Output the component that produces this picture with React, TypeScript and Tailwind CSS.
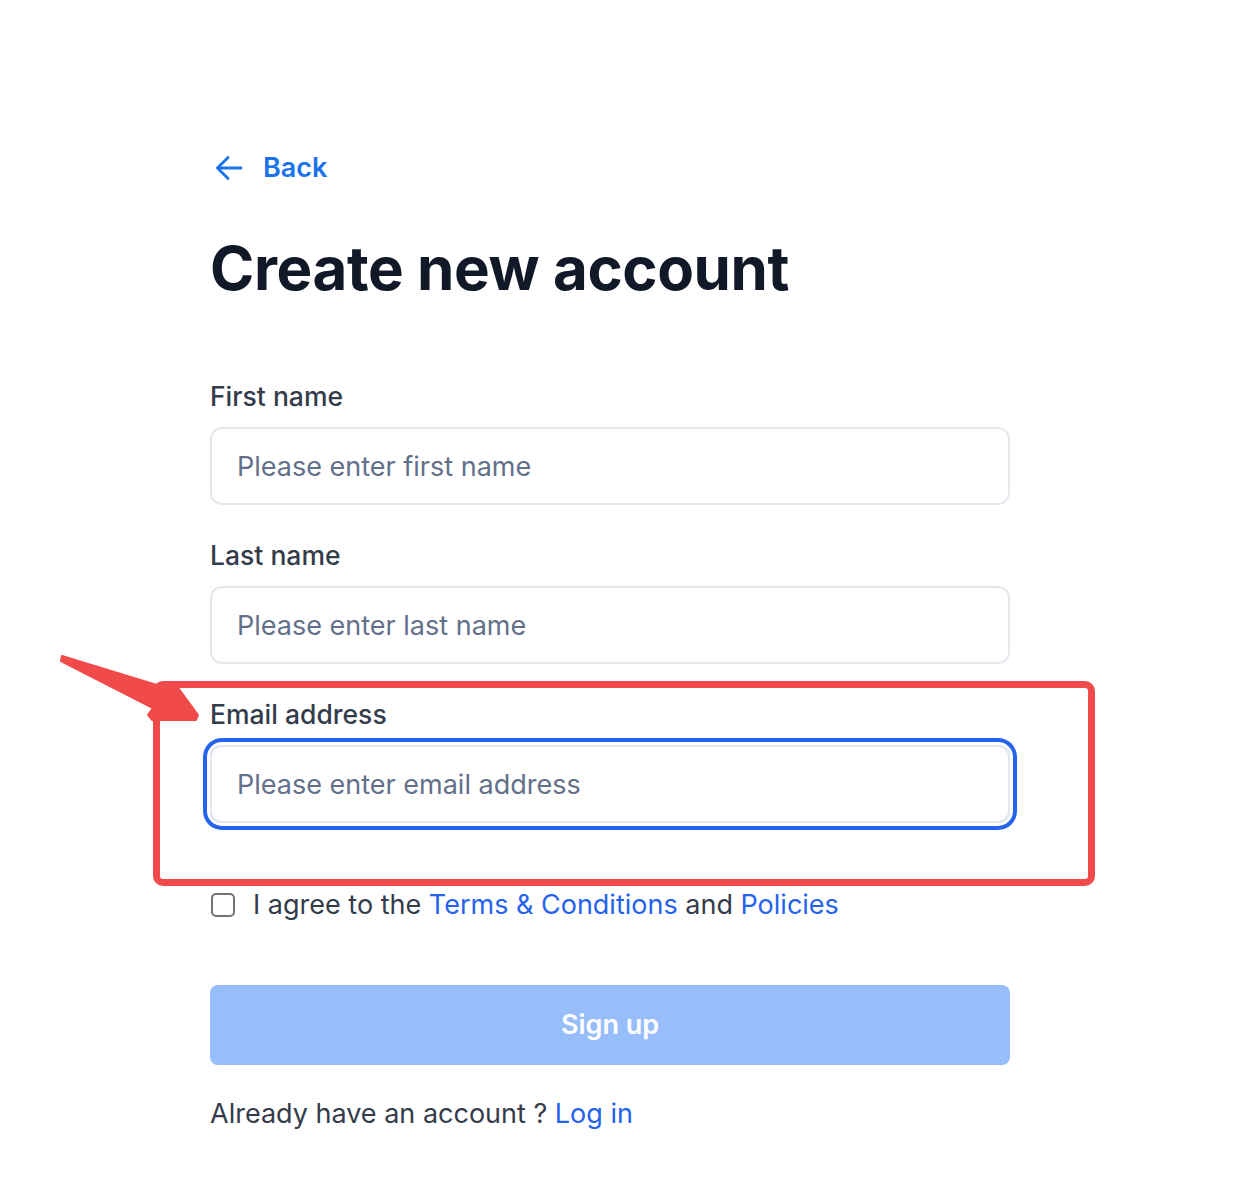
import React from 'react';

const font = { fontFamily: 'Inter, "Noto Sans", sans-serif' };

function Field({ label, placeholder, focused }: { label: string; placeholder: string; focused?: boolean }) {
    return (
        <div className="flex flex-col">
            <label className="text-[26.5px] leading-[36px] font-medium text-[#343c4b]">{label}</label>
            <input
                placeholder={placeholder}
                className={`mt-[13px] h-[78px] w-full rounded-[12px] border-2 border-[#e3e8ef] px-[25px] text-[27px] text-[#1f2937] placeholder:text-[#63708a] outline-none ${focused ? 'ring-4 ring-[#2563eb] ring-offset-[3px] ring-offset-white' : ''}`}
            />
        </div>
    );
}

export default function App() {
    return (
        <div className="relative min-h-[1184px] bg-white" style={font}>
            <div className="ml-[210px] w-[800px] pt-[148px]">
                {/* back link */}
                <a href="#" className="flex h-[40px] items-center gap-[20px] pl-[5px] text-[27px] font-semibold text-[#1a73e8]">
                    <svg width="28" height="26" viewBox="0 0 28 26" fill="none" stroke="currentColor" strokeWidth="2.8" strokeLinecap="round" strokeLinejoin="round">
                        <path d="M26 13H3" />
                        <path d="M13 2.5 2.5 13 13 23.5" />
                    </svg>
                    Back
                </a>

                <h1 className="mt-[44px] text-[60px] leading-[72px] font-bold tracking-[-0.4px] text-[#111827]">Create new account</h1>

                <div className="mt-[74px] flex flex-col gap-[32px]">
                    <Field label="First name" placeholder="Please enter first name" />
                    <Field label="Last name" placeholder="Please enter last name" />
                    <Field label="Email address" placeholder="Please enter email address" focused />
                </div>

                <label className="mt-[64px] flex h-[36px] items-center gap-[18px] pl-[1px] text-[27px] text-[#343c4b]">
                    <span className="h-[24px] w-[24px] shrink-0 rounded-[5px] border-2 border-[#6f7277] bg-white" />
                    <span>
                        I agree to the <a href="#" className="text-[#2563eb]">Terms &amp; Conditions</a> and{' '}
                        <a href="#" className="text-[#2563eb]">Policies</a>
                    </span>
                </label>

                <button className="mt-[62px] flex h-[80px] w-full items-center justify-center rounded-[8px] bg-[#97bdfb] text-[27px] font-semibold text-white">
                    Sign up
                </button>

                <p className="mt-[31px] text-[27px] leading-[36px] text-[#343c4b]">
                    Already have an account ? <a href="#" className="text-[#2563eb]">Log in</a>
                </p>
            </div>

            {/* annotation overlay */}
            <div className="pointer-events-none absolute left-[153px] top-[681px] h-[205px] w-[942px] rounded-[10px] border-[7px] border-[#f04a4a]" />
            <svg className="pointer-events-none absolute left-0 top-0" width="240" height="760" viewBox="0 0 240 760">
                <polygon
                    points="62,656 160,686 176,685 198,715 196,720 152,720 148,715 153,708 61,661"
                    fill="#f04a4a"
                    strokeLinejoin="round"
                    stroke="#f04a4a"
                    strokeWidth="2"
                />
            </svg>
        </div>
    );
}
